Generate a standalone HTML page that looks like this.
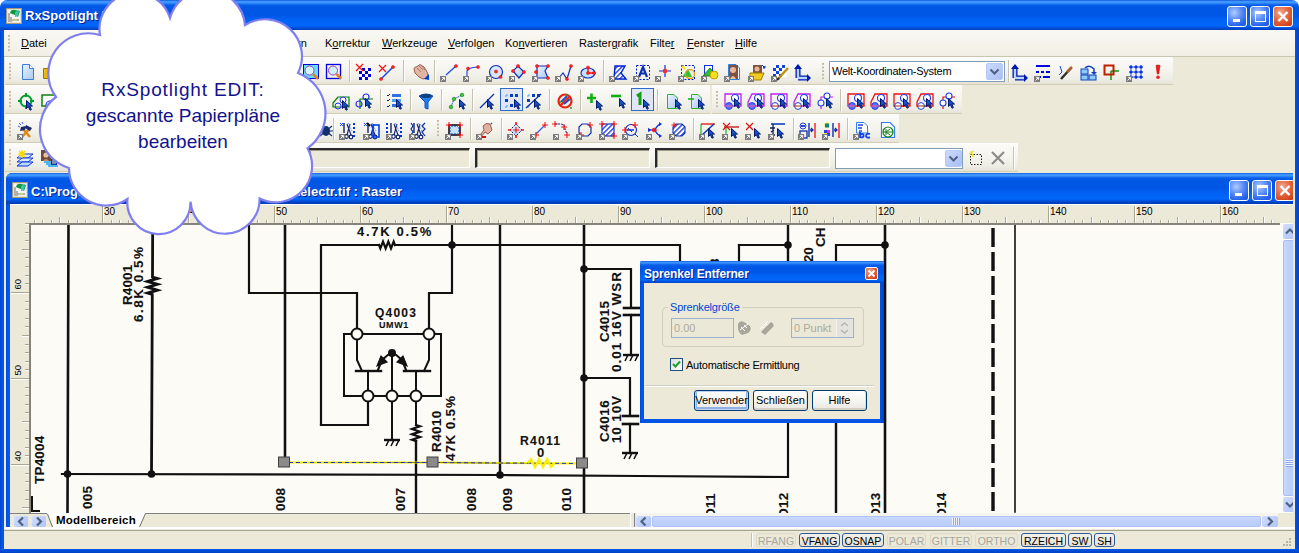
<!DOCTYPE html><html><head><meta charset="utf-8"><style>
*{box-sizing:border-box}
html,body{margin:0;padding:0}
body{width:1299px;height:553px;overflow:hidden;position:relative;background:#fff;font-family:"Liberation Sans", sans-serif;font-size:11px;color:#000}
.a{position:absolute}
.title{background:linear-gradient(to bottom,#0842D0 0px,#3D95FF 1px,#3D95FF 3px,#1A6FF0 4px,#0058E6 6px,#0055E5 15px,#0062F4 20px,#0066FA 26px,#0050D8 28px,#003DBB 30px)}
.ttext{color:#fff;font-weight:bold;font-size:13px;line-height:15px;text-shadow:1px 1px 0 #0A1E8C;white-space:nowrap}
.tb{position:absolute;background:linear-gradient(to bottom,#FCFCFA 0%,#F6F5F0 40%,#EEEDE4 80%,#E4E1D2 100%);box-shadow:inset 0 -1px 0 #D3CEB6}
.grip{position:absolute;width:3px;background:linear-gradient(to bottom,#BFBAA0 0,#BFBAA0 2px,transparent 2px) 0 0/2px 3.6px no-repeat;background-repeat:repeat-y}
.sep{position:absolute;width:2px;border-left:1px solid #C5C2B2;border-right:1px solid #fff}
.m{position:absolute;top:37px;line-height:12px;white-space:nowrap}
.m u{text-decoration:underline;text-underline-offset:1px}
</style></head><body>
<div class="a title" style="left:0;top:0;width:1299px;height:30px;border-radius:7px 7px 0 0"></div>
<div class="a" style="left:0;top:30px;width:4px;height:523px;background:linear-gradient(to right,#0041C8,#0058EE 2px,#0055E5)"></div>
<div class="a" style="left:1295px;top:30px;width:4px;height:523px;background:linear-gradient(to right,#0055E5,#0041C8)"></div>
<div class="a" style="left:0;top:549px;width:1299px;height:4px;background:linear-gradient(to bottom,#0055E5,#0041C8)"></div>
<div class="a" style="left:4px;top:30px;width:1291px;height:519px;background:#ECE9D8"></div>
<svg class="a" style="left:6px;top:8px" width="16" height="16"><rect x="0.5" y="0.5" width="15" height="15" fill="#E4E2DA" stroke="#A89A78"/><rect x="2" y="2" width="12" height="12" fill="#F4F4F0"/><path d="M4 5Q5 1 9 2L14 3L12 9L9 7L6 6Z" fill="#109840"/><path d="M9 4L13 2L12 8L9 9Z" fill="#40C0B0"/><path d="M3 5V14M5 9V14M6 12H13" stroke="#707070" stroke-width="1"/><ellipse cx="9" cy="12" rx="2.5" ry="1" fill="#C8D080"/></svg>
<div class="a ttext" style="left:25px;top:8px">RxSpotlight EDIT</div>
<div class="a" style="left:1227px;top:6px;width:20px;height:21px;border:1px solid #fff;border-radius:3px;background:radial-gradient(circle at 35% 30%,#B0CCFF 0%,#5C8FF5 40%,#2663EB 75%,#1C55D8 100%);overflow:hidden"><div class="a" style="left:5px;top:12px;width:7px;height:3px;background:#fff"></div></div>
<div class="a" style="left:1250px;top:6px;width:20px;height:21px;border:1px solid #fff;border-radius:3px;background:radial-gradient(circle at 35% 30%,#B0CCFF 0%,#5C8FF5 40%,#2663EB 75%,#1C55D8 100%);overflow:hidden"><div class="a" style="left:4px;top:4px;width:11px;height:11px;border:1px solid #fff;border-top-width:3px"></div></div>
<div class="a" style="left:1273px;top:6px;width:20px;height:21px;border:1px solid #fff;border-radius:3px;background:radial-gradient(circle at 35% 30%,#F0A890 0%,#E2683F 45%,#D2451C 80%,#C03C18 100%);overflow:hidden"><svg class="a" style="left:-1px;top:-1px" width="20" height="21"><path d="M5.5 6L14.5 15M14.5 6L5.5 15" stroke="#fff" stroke-width="2.4"/></svg></div>
<div class="a" style="left:4px;top:30px;width:1291px;height:27px;background:linear-gradient(to bottom,#F9F8F3,#F1EFE4);border-bottom:1px solid #C9C5AE"></div>
<div class="grip" style="left:8px;top:35px;height:16px"></div>
<div class="m" style="left:21px"><u>D</u>atei</div>
<div class="m" style="left:297px">rn</div>
<div class="m" style="left:325px">K<u>o</u>rrektur</div>
<div class="m" style="left:382px"><u>W</u>erkzeuge</div>
<div class="m" style="left:448px"><u>V</u>erfolgen</div>
<div class="m" style="left:505px">Ko<u>n</u>vertieren</div>
<div class="m" style="left:579px">Raster<u>g</u>rafik</div>
<div class="m" style="left:650px">Filte<u>r</u></div>
<div class="m" style="left:687px"><u>F</u>enster</div>
<div class="m" style="left:735px"><u>H</u>ilfe</div>
<div class="tb" style="left:5px;top:57px;width:813px;height:28px"></div>
<div class="grip" style="left:9px;top:63px;height:18px"></div>
<div class="tb" style="left:818px;top:57px;width:355px;height:28px"></div>
<div class="grip" style="left:822px;top:63px;height:18px"></div>
<div class="tb" style="left:5px;top:85px;width:705px;height:29px"></div>
<div class="grip" style="left:9px;top:91px;height:18px"></div>
<div class="tb" style="left:712px;top:85px;width:250px;height:29px"></div>
<div class="grip" style="left:716px;top:91px;height:18px"></div>
<div class="tb" style="left:5px;top:114px;width:428px;height:29px"></div>
<div class="grip" style="left:9px;top:120px;height:18px"></div>
<div class="tb" style="left:433px;top:114px;width:466px;height:29px"></div>
<div class="grip" style="left:437px;top:120px;height:18px"></div>
<div class="tb" style="left:5px;top:143px;width:1013px;height:29px"></div>
<div class="grip" style="left:9px;top:149px;height:18px"></div>
<div class="sep" style="left:349px;top:60px;height:22px"></div>
<div class="sep" style="left:403px;top:60px;height:22px"></div>
<div class="sep" style="left:434px;top:60px;height:22px"></div>
<div class="sep" style="left:603px;top:60px;height:22px"></div>
<div class="sep" style="left:1008px;top:60px;height:22px"></div>
<div class="sep" style="left:380px;top:89px;height:22px"></div>
<div class="sep" style="left:410px;top:89px;height:22px"></div>
<div class="sep" style="left:441px;top:89px;height:22px"></div>
<div class="sep" style="left:472px;top:89px;height:22px"></div>
<div class="sep" style="left:549px;top:89px;height:22px"></div>
<div class="sep" style="left:580px;top:89px;height:22px"></div>
<div class="sep" style="left:657px;top:89px;height:22px"></div>
<div class="sep" style="left:840px;top:89px;height:22px"></div>
<div class="sep" style="left:333px;top:118px;height:22px"></div>
<div class="sep" style="left:470px;top:118px;height:22px"></div>
<div class="sep" style="left:501px;top:118px;height:22px"></div>
<div class="sep" style="left:693px;top:118px;height:22px"></div>
<div class="sep" style="left:793px;top:118px;height:22px"></div>
<div class="sep" style="left:847px;top:118px;height:22px"></div>
<div class="sep" style="left:1013px;top:147px;height:22px"></div>
<div class="a" style="left:500px;top:88px;width:23px;height:23px;background:#E1E6F6;border:1px solid #316AC5"></div>
<div class="a" style="left:631px;top:88px;width:23px;height:23px;background:#E1E6F6;border:1px solid #316AC5"></div>
<div class="a" style="left:829px;top:61px;width:176px;height:21px;background:#fff;border:1px solid #7F9DB9"></div>
<div class="a" style="left:832px;top:65px;line-height:13px;font-size:11px;letter-spacing:-0.25px">Welt-Koordinaten-System</div>
<div class="a" style="left:986px;top:63px;width:17px;height:17px;border-radius:2px;background:linear-gradient(135deg,#CCDAFD,#B6CAF8 60%,#A8BFF5);border:1px solid #B5C8F7"></div><svg class="a" style="left:986px;top:63px" width="17" height="17"><path d="M4.5 6.5L8.5 10.5L12.5 6.5" stroke="#4D6185" stroke-width="2" fill="none"/></svg>
<div class="a" style="left:308px;top:148px;width:162px;height:20px;border-top:2px solid #2A2A2A;border-left:2px solid #2A2A2A;border-right:1px solid #fff;border-bottom:1px solid #fff;background:#ECE9D8;box-shadow:inset 1px 1px 0 #9D9A8A"></div>
<div class="a" style="left:475px;top:148px;width:175px;height:20px;border-top:2px solid #2A2A2A;border-left:2px solid #2A2A2A;border-right:1px solid #fff;border-bottom:1px solid #fff;background:#ECE9D8;box-shadow:inset 1px 1px 0 #9D9A8A"></div>
<div class="a" style="left:655px;top:148px;width:175px;height:20px;border-top:2px solid #2A2A2A;border-left:2px solid #2A2A2A;border-right:1px solid #fff;border-bottom:1px solid #fff;background:#ECE9D8;box-shadow:inset 1px 1px 0 #9D9A8A"></div>
<div class="a" style="left:835px;top:148px;width:128px;height:21px;background:#fff;border:1px solid #7F9DB9"></div>
<div class="a" style="left:945px;top:150px;width:17px;height:17px;border-radius:2px;background:linear-gradient(135deg,#CCDAFD,#B6CAF8 60%,#A8BFF5);border:1px solid #B5C8F7"></div><svg class="a" style="left:945px;top:150px" width="17" height="17"><path d="M4.5 6.5L8.5 10.5L12.5 6.5" stroke="#4D6185" stroke-width="2" fill="none"/></svg>
<svg class="a" style="left:0;top:0" width="1299" height="200"><defs>
<g id="ab"><rect x="0" y="12" width="6" height="6" fill="#7C7C7C"/><path d="M1.5 16.5L4.3 13.7M2.2 13.6H4.4V15.8" stroke="#fff" stroke-width="1" fill="none"/></g>
<g id="cur"><path d="M0.5 0.5V8.5L2.4 6.7L4 10.2L5.4 9.6L3.8 6.1H6.5Z" fill="#1A4FC0" stroke="#001A70" stroke-width="1" stroke-linejoin="round"/></g>
<g id="rdot"><circle r="1.6" fill="#FF2020" stroke="#D00000" stroke-width="0.4"/></g>
<pattern id="hatch" width="3.5" height="3.5" patternUnits="userSpaceOnUse" patternTransform="rotate(45)"><rect width="3.5" height="3.5" fill="#fff"/><rect width="1.3" height="3.5" fill="#1030D8"/></pattern>
<linearGradient id="lb" x1="0" y1="0" x2="1" y2="1"><stop offset="0" stop-color="#EAF4FF"/><stop offset="1" stop-color="#A8C8F0"/></linearGradient>
</defs><g transform="translate(21,64)"><path d="M1.5 0.5H8.5L12.5 4.5V15.5H1.5Z" fill="url(#lb)" stroke="#3A7BE0"/><path d="M8.5 0.5V4.5H12.5" fill="#fff" stroke="#3A7BE0"/></g><g transform="translate(43,64)"><path d="M0.5 4.5H6L7.5 3H14.5V14.5H0.5Z" fill="#E8B818" stroke="#A07800"/></g><g transform="translate(303,64)"><rect x="0.5" y="0.5" width="15" height="14" fill="#60E0F0" stroke="#0000E0"/><circle cx="6.5" cy="6.5" r="4.5" fill="#D8F4FF" stroke="#A040C0"/><path d="M10 10L15 15" stroke="#E08020" stroke-width="2.5"/></g><g transform="translate(326,64)"><rect x="0.5" y="0.5" width="14" height="14" fill="none" stroke="#0000E0" stroke-width="1.3"/><circle cx="7" cy="6.5" r="4.5" fill="#D0F0FF" stroke="#A040C0"/><path d="M10.5 10L15 14.5" stroke="#E08020" stroke-width="2.5"/></g><g transform="translate(356,64)"><g fill="#0000E0"><rect x="4" y="4" width="12" height="12" fill="#fff"/><rect x="6" y="4" width="3" height="3"/><rect x="12" y="4" width="3" height="3"/><rect x="9" y="7" width="3" height="3"/><rect x="3" y="7" width="3" height="3"/><rect x="6" y="10" width="3" height="3"/><rect x="12" y="10" width="3" height="3"/><rect x="9" y="13" width="3" height="3"/><rect x="3" y="13" width="3" height="3"/></g><path d="M0 0L7 7M7 0L0 7" stroke="#FF1010" stroke-width="1.2"/></g><g transform="translate(379,64)"><path d="M2 15L14 3" stroke="#2050E0" stroke-width="1.6"/><use href="#rdot" x="2" y="15"/><use href="#rdot" x="14" y="3"/><path d="M0 1L7 8M7 1L0 8" stroke="#FF1010" stroke-width="1.2"/></g><g transform="translate(413,64)"><path d="M1 5Q1 3 3 3L5 2Q6 0 8 1L11 3L13 6L15 10L14 14L10 15L6 13L2 9Z" fill="#E2B4A4" stroke="#9A6050"/><path d="M4 4L8 8M6 2L10 6M9 2L12 6" stroke="#B07868" stroke-width="1"/><path d="M11 15L16 10V16Z" fill="#0040D0"/></g><g transform="translate(440,64)"><path d="M6 11L16 2" stroke="#2050E0" stroke-width="1.3"/><use href="#rdot" x="16" y="2"/><use href="#ab"/></g><g transform="translate(463,64)"><path d="M4 12V7Q6 4 10 3.5L15 3" stroke="#2050E0" stroke-width="1.2" fill="none"/><use href="#rdot" x="5" y="4.5"/><use href="#rdot" x="15" y="3"/><use href="#ab"/></g><g transform="translate(486,64)"><circle cx="10" cy="8" r="6.5" fill="#D8E8F8" stroke="#1030C0" stroke-width="1.2"/><use href="#rdot" x="10" y="7.5"/><use href="#rdot" x="14.5" y="13"/><use href="#ab"/></g><g transform="translate(509,64)"><path d="M9 2L15 8L10 14L4 7Z" fill="url(#lb)" stroke="#1030C0" stroke-width="1.2"/><use href="#rdot" x="9" y="2"/><use href="#rdot" x="15" y="8"/><use href="#rdot" x="4" y="7"/><use href="#ab"/></g><g transform="translate(532,64)"><path d="M5 2H16L13 7L16 14H5Z" fill="url(#lb)" stroke="#1030C0" stroke-width="1.2"/><use href="#rdot" x="5" y="2"/><use href="#rdot" x="16" y="2"/><use href="#rdot" x="4" y="8"/><use href="#rdot" x="16" y="14"/><use href="#ab"/></g><g transform="translate(555,64)"><path d="M4 14L8 9L12 15L16 2" stroke="#1030C0" stroke-width="1.2" fill="none"/><use href="#rdot" x="12" y="15"/><use href="#rdot" x="16" y="2"/><use href="#ab"/></g><g transform="translate(578,64)"><ellipse cx="10" cy="9" rx="7" ry="5" fill="#C8E0F8" stroke="#1030C0" stroke-width="1.2"/><path d="M10 3V9H16" stroke="#FF1010" stroke-width="1.3" fill="none"/><use href="#rdot" x="10" y="3.5"/><use href="#rdot" x="10" y="9"/><use href="#rdot" x="16" y="9"/><use href="#ab"/></g><g transform="translate(609,64)"><path d="M6 2H16L12 9L17 15H5Z" fill="url(#hatch)" stroke="#0020D0" stroke-width="1.4"/><use href="#ab"/></g><g transform="translate(633,64)"><rect x="3.5" y="1.5" width="13" height="14" fill="none" stroke="#0020D0" stroke-dasharray="2 1.5"/><path d="M6 13L10 3L14 13M7.5 9.5H12.5" stroke="#1030B0" stroke-width="2.2" fill="none"/><use href="#ab"/></g><g transform="translate(655,64)"><path d="M4 7H16M10 1V13" stroke="#1030E0" stroke-width="1.2"/><circle cx="10" cy="7" r="2.3" fill="#F03030"/><use href="#ab"/></g><g transform="translate(678,64)"><rect x="3.5" y="1.5" width="13" height="14" fill="none" stroke="#0020D0" stroke-dasharray="2 1.5"/><path d="M4 13L10 5L14 13Z" fill="#30C030"/><circle cx="12" cy="10" r="4.5" fill="none" stroke="#E0A020" stroke-width="1.3"/><path d="M4 2L7 5" stroke="#FFE000" stroke-width="2"/><use href="#ab"/></g><g transform="translate(701,64)"><rect x="3.5" y="1.5" width="8" height="9" fill="#fff" stroke="#1030E0"/><path d="M2 12L9 4L15 12Z" fill="#30C030" stroke="#208020"/><circle cx="13" cy="11" r="4" fill="#F0E020" stroke="#C0A000"/><use href="#ab"/></g><g transform="translate(724,64)"><path d="M4.5 0.5H12L15.5 4V15.5H4.5Z" fill="#fff" stroke="#3080E0"/><rect x="5" y="1" width="9" height="14" fill="#805040"/><circle cx="9" cy="6" r="3" fill="#E8B898"/><path d="M6 15Q9 9 12 15" fill="#E8C0A0"/><use href="#ab"/></g><g transform="translate(748,64)"><rect x="5" y="1" width="9" height="11" fill="#805040"/><circle cx="9" cy="5" r="2.5" fill="#E8B898"/><path d="M14 1L17 4M15 4H17V2" stroke="#0030C0"/><path d="M2 9H10L16 9L13 16H2Z" fill="#F0C820" stroke="#A08000"/><use href="#ab"/></g><g transform="translate(771,64)"><g fill="#1040E0"><rect x="3" y="1" width="13" height="12" fill="#fff"/><rect x="5" y="1" width="3" height="3"/><rect x="11" y="1" width="3" height="3"/><rect x="8" y="4" width="3" height="3"/><rect x="2" y="4" width="3" height="3"/><rect x="5" y="7" width="3" height="3"/><rect x="2" y="10" width="3" height="3"/><rect x="8" y="10" width="3" height="3"/></g><path d="M7 15L17 4" stroke="#C09010" stroke-width="2.5"/><path d="M6 16L8 14" stroke="#202020" stroke-width="2"/><use href="#ab"/></g><g transform="translate(794,64)"><path d="M4 14V4M4 14H14" stroke="#0018B0" stroke-width="5"/><path d="M4 14V4M4 14H14" stroke="#B8D4FA" stroke-width="2.4"/><path d="M0 5L4 0L8 5Z M13 10L17 14L13 18Z" fill="#0018B0"/></g><g transform="translate(1011,64)"><path d="M4 14V4M4 14H14" stroke="#0018B0" stroke-width="5"/><path d="M4 14V4M4 14H14" stroke="#B8D4FA" stroke-width="2.4"/><path d="M0 5L4 0L8 5Z M13 10L17 14L13 18Z" fill="#0018B0"/></g><g transform="translate(1034,64)"><path d="M2 2H16M2 8H5M7 8H10M12 8H16M2 13H7M9 13H16" stroke="#0000E0" stroke-width="2.2"/><use href="#ab"/></g><g transform="translate(1057,64)"><path d="M4 15L14 4" stroke="#303030" stroke-width="2.5"/><path d="M10 8L15 3" stroke="#B06030" stroke-width="2.5"/><path d="M3 2L5 8L2 11" stroke="#2040D0" stroke-width="1" fill="none"/></g><g transform="translate(1080,64)"><rect x="1" y="5" width="7" height="5" fill="#8ACCF8" stroke="#1040C0"/><rect x="1" y="11" width="7" height="5" fill="#8ACCF8" stroke="#1040C0"/><rect x="9" y="11" width="7" height="5" fill="#8ACCF8" stroke="#1040C0"/><path d="M5 4Q9 0 14 5V10" stroke="#1040C0" stroke-width="1.5" fill="none"/><path d="M11 8H17L14 11Z" fill="#1040C0"/></g><g transform="translate(1103,64)"><path d="M8 7H16M8 7V16" stroke="#109010" stroke-width="1.5"/><rect x="1.5" y="1.5" width="9" height="9" fill="none" stroke="#C02000" stroke-width="2"/></g><g transform="translate(1126,64)"><g fill="#0030F0"><circle cx="5" cy="3" r="1.6"/><circle cx="10" cy="3" r="1.6"/><circle cx="15" cy="3" r="1.6"/><circle cx="5" cy="8" r="1.6"/><circle cx="10" cy="8" r="1.6"/><circle cx="15" cy="8" r="1.6"/><circle cx="5" cy="13" r="1.6"/><circle cx="10" cy="13" r="1.6"/><circle cx="15" cy="13" r="1.6"/></g><path d="M3 3H17M3 8H17M3 13H17M5 1V15M10 1V15M15 1V15" stroke="#0030F0" stroke-width="0.8"/><use href="#ab"/></g><g transform="translate(1153,64)"><path d="M3 1.5Q5 0.5 7 1.5L5.7 10H4.3Z" fill="#F02020" stroke="#C00000" stroke-width="0.6"/><circle cx="5" cy="13.3" r="1.8" fill="#F02020"/></g><g transform="translate(18,93)"><circle cx="8" cy="8" r="5.5" fill="none" stroke="#00A030" stroke-width="2"/><path d="M8 0V4M8 12V16M0 8H4M12 8H16" stroke="#00A030" stroke-width="2"/><use href="#cur" x="8" y="7"/></g><g transform="translate(41,93)"><rect x="1" y="2" width="14" height="11" fill="#fff" stroke="#108010" stroke-width="1.5"/><circle cx="9" cy="12" r="4" fill="#fff" stroke="#1040E0" stroke-width="1.2"/></g><g transform="translate(332,93)"><path d="M1 10L6 4H17V14H1Z" fill="none" stroke="#008000" stroke-width="1.2"/><circle cx="11" cy="7" r="3" fill="#fff" stroke="#2030F0"/><circle cx="6" cy="13" r="3" fill="none" stroke="#2030F0"/><use href="#cur" x="10" y="7"/></g><g transform="translate(356,93)"><path d="M4 16V6H17" stroke="#008000" stroke-width="1.2" fill="none"/><circle cx="10" cy="4" r="3" fill="none" stroke="#2030F0" stroke-width="1.2"/><circle cx="3" cy="11" r="3" fill="none" stroke="#2030F0" stroke-width="1.2"/><use href="#cur" x="9" y="5"/></g><g transform="translate(386,93)"><path d="M1 2L2 3L4 1M1 7L2 8L4 6M1 13L2 14L4 12" stroke="#102080" fill="none"/><rect x="6" y="1" width="9" height="3" fill="#3070E0"/><rect x="6" y="6" width="9" height="3" fill="#50A0F0"/><rect x="6" y="11" width="9" height="3" fill="#3070E0"/><use href="#cur" x="10" y="6"/></g><g transform="translate(418,93)"><path d="M1 3Q8 -1 15 3L10 9V16L7 15V9Z" fill="#2080F0" stroke="#1050C0"/><ellipse cx="8" cy="3" rx="6" ry="2" fill="#104080"/></g><g transform="translate(449,93)"><path d="M2 14L5 6L13 2" stroke="#1030D0" stroke-dasharray="1.5 1" fill="none"/><circle cx="2" cy="14" r="1.8" fill="#40C040" stroke="#108010" stroke-width="0.6"/><circle cx="5" cy="6" r="1.8" fill="#40C040" stroke="#108010" stroke-width="0.6"/><circle cx="13" cy="2" r="1.8" fill="#40C040" stroke="#108010" stroke-width="0.6"/><use href="#cur" x="10" y="6"/></g><g transform="translate(479,93)"><path d="M1 15L15 1" stroke="#1030B0" stroke-width="1.3"/><use href="#cur" x="8" y="6"/></g><g transform="translate(503,93)"><g fill="#0040C0"><rect x="7" y="1" width="3" height="3"/><rect x="12" y="1" width="3" height="3"/><rect x="2" y="6" width="3" height="3"/><rect x="7" y="11" width="3" height="3"/></g><path d="M2 3H4V1M2 14H4V12" stroke="#40A0F0" fill="none"/><use href="#cur" x="11" y="6"/></g><g transform="translate(525,93)"><g fill="#0040C0"><rect x="7" y="1" width="3" height="3"/><rect x="12" y="1" width="3" height="3"/><rect x="2" y="6" width="3" height="3"/></g><path d="M2 3H4V1M2 14H4V12" stroke="#40A0F0" fill="none"/><path d="M1 15L16 1" stroke="#1030B0" stroke-width="1.3"/><use href="#cur" x="9" y="6"/></g><g transform="translate(557,93)"><circle cx="8" cy="8" r="6.5" fill="none" stroke="#F02010" stroke-width="2.2"/><path d="M3 13L13 3" stroke="#F02010" stroke-width="2.2"/><path d="M4 9L10 3M7 11L13 6" stroke="#2050C0" stroke-width="2"/><circle cx="3" cy="9" r="1" fill="#20A020"/><circle cx="14" cy="15" r="1" fill="#20A020"/><circle cx="10" cy="2" r="1" fill="#20A020"/></g><g transform="translate(587,93)"><path d="M0 5H9M4.5 0.5V10" stroke="#10B010" stroke-width="2.6"/><use href="#cur" x="9" y="7"/></g><g transform="translate(610,93)"><path d="M1 3H11" stroke="#10B010" stroke-width="2.6"/><use href="#cur" x="9" y="5"/></g><g transform="translate(634,93)"><path d="M3 3L6 1V12" stroke="#10A010" stroke-width="3" fill="none"/><use href="#cur" x="9" y="6"/></g><g transform="translate(666,93)"><path d="M1.5 1.5H8L11.5 5V15.5H1.5Z" fill="url(#lb)" stroke="#30B030"/><use href="#cur" x="9" y="6"/></g><g transform="translate(688,93)"><path d="M3.5 1.5H10L13.5 5V15.5H3.5Z" fill="url(#lb)" stroke="#30B030"/><path d="M0 6H6" stroke="#20B020" stroke-width="1.6"/><use href="#cur" x="10" y="6"/></g><g transform="translate(724,93)"><path d="M1 1H17V13H1Z" fill="none" stroke="#C020F0" stroke-width="1.3"/><circle cx="11" cy="5" r="3.5" fill="#fff" stroke="#2040F0" stroke-width="1.1"/><circle cx="5" cy="13" r="3.4" fill="#6070F0" stroke="#2040F0"/><path d="M1 13H9" stroke="#F060A0"/><use href="#cur" x="10" y="5"/></g><g transform="translate(747,93)"><path d="M1 9L5 1H17V13H1Z" fill="none" stroke="#C020F0" stroke-width="1.3"/><circle cx="11" cy="5" r="3.5" fill="#fff" stroke="#2040F0" stroke-width="1.1"/><circle cx="5" cy="13" r="3.4" fill="#6070F0" stroke="#2040F0"/><path d="M1 13H9" stroke="#F060A0"/><use href="#cur" x="10" y="5"/></g><g transform="translate(770,93)"><path d="M1 1H17V13H1Z" fill="none" stroke="#C020F0" stroke-width="1.3"/><circle cx="11" cy="5" r="3.5" fill="#fff" stroke="#2040F0" stroke-width="1.1"/><circle cx="5" cy="13" r="3.4" fill="#fff" stroke="#2040F0"/><path d="M1 13H9" stroke="#A03010"/><use href="#cur" x="10" y="5"/></g><g transform="translate(793,93)"><path d="M1 9L5 1H17V13H1Z" fill="none" stroke="#C020F0" stroke-width="1.3"/><circle cx="11" cy="5" r="3.5" fill="#fff" stroke="#2040F0" stroke-width="1.1"/><circle cx="5" cy="13" r="3.4" fill="#fff" stroke="#2040F0"/><path d="M1 13H9" stroke="#A03010"/><use href="#cur" x="10" y="5"/></g><g transform="translate(818,93)"><path d="M3 16V4H15" stroke="#C020F0" stroke-width="1.2" fill="none"/><circle cx="9" cy="3" r="3" fill="#fff" stroke="#2040F0" stroke-width="1.1"/><circle cx="3" cy="10" r="3" fill="#fff" stroke="#2040F0" stroke-width="1.1"/><use href="#cur" x="8" y="5"/></g><g transform="translate(847,93)"><path d="M1 1H17V13H1Z" fill="none" stroke="#F01010" stroke-width="1.3"/><circle cx="11" cy="5" r="3.5" fill="#fff" stroke="#2040F0" stroke-width="1.1"/><circle cx="5" cy="13" r="3.4" fill="#6070F0" stroke="#2040F0"/><path d="M1 13H9" stroke="#F060A0"/><use href="#cur" x="10" y="5"/></g><g transform="translate(870,93)"><path d="M1 9L5 1H17V13H1Z" fill="none" stroke="#F01010" stroke-width="1.3"/><circle cx="11" cy="5" r="3.5" fill="#fff" stroke="#2040F0" stroke-width="1.1"/><circle cx="5" cy="13" r="3.4" fill="#6070F0" stroke="#2040F0"/><path d="M1 13H9" stroke="#F060A0"/><use href="#cur" x="10" y="5"/></g><g transform="translate(893,93)"><path d="M1 1H17V13H1Z" fill="none" stroke="#F01010" stroke-width="1.3"/><circle cx="11" cy="5" r="3.5" fill="#fff" stroke="#2040F0" stroke-width="1.1"/><circle cx="5" cy="13" r="3.4" fill="#fff" stroke="#2040F0"/><path d="M1 13H9" stroke="#A03010"/><use href="#cur" x="10" y="5"/></g><g transform="translate(916,93)"><path d="M1 9L5 1H17V13H1Z" fill="none" stroke="#F01010" stroke-width="1.3"/><circle cx="11" cy="5" r="3.5" fill="#fff" stroke="#2040F0" stroke-width="1.1"/><circle cx="5" cy="13" r="3.4" fill="#fff" stroke="#2040F0"/><path d="M1 13H9" stroke="#A03010"/><use href="#cur" x="10" y="5"/></g><g transform="translate(940,93)"><path d="M3 16V4H15" stroke="#E01010" stroke-width="1.2" fill="none"/><circle cx="9" cy="3" r="3" fill="#fff" stroke="#2040F0" stroke-width="1.1"/><circle cx="3" cy="10" r="3" fill="#fff" stroke="#2040F0" stroke-width="1.1"/><use href="#cur" x="8" y="5"/></g><g transform="translate(17,122)"><path d="M5 15L13 6M13 15L6 7" stroke="#E08818" stroke-width="2.6"/><path d="M9 3L15 6L13 9L8 6Z M4 5L9 4L8 8L3 9Z" fill="#1A2A6A"/><path d="M2 1L4 3M5 0L6 2M1 4L3 5" stroke="#3060E0"/><use href="#ab"/></g><g transform="translate(318,122)"><ellipse cx="8" cy="9" rx="4" ry="5" fill="#103070"/><path d="M2 4L14 14M2 14L14 4M1 9H15" stroke="#103070" stroke-width="1.1"/></g><g transform="translate(339,122)"><path d="M5 1V11" stroke="#102070" stroke-width="1.4"/><path d="M8 2L12 13M11 2L8 13" stroke="#102070" stroke-width="1.1"/><path d="M9 1L13 9" stroke="#5080E0" stroke-dasharray="1 1"/><circle cx="7.5" cy="14.5" r="1.8" fill="#fff" stroke="#102070" stroke-width="1.2"/><circle cx="12" cy="15" r="1.8" fill="#fff" stroke="#102070" stroke-width="1.2"/><path d="M15 1V16" stroke="#0030F0" stroke-width="2" stroke-dasharray="2 2"/><path d="M1 1L4 4M1 4L4 1" stroke="#2040E0"/><use href="#ab"/></g><g transform="translate(363,122)"><path d="M5 1V11" stroke="#102070" stroke-width="1.4"/><path d="M8 2L12 13M11 2L8 13" stroke="#102070" stroke-width="1.1"/><path d="M9 1L13 9" stroke="#5080E0" stroke-dasharray="1 1"/><circle cx="7.5" cy="14.5" r="1.8" fill="#fff" stroke="#102070" stroke-width="1.2"/><circle cx="12" cy="15" r="1.8" fill="#fff" stroke="#102070" stroke-width="1.2"/><rect x="10" y="3" width="6" height="12" fill="none" stroke="#0040F0" stroke-width="1.6"/><path d="M1 1L4 4M1 4L4 1" stroke="#2040E0"/><path d="M4 1L7 4" stroke="#101010" stroke-width="2"/><use href="#ab"/></g><g transform="translate(386,122)"><path d="M5 1V11" stroke="#102070" stroke-width="1.4"/><path d="M8 2L12 13M11 2L8 13" stroke="#102070" stroke-width="1.1"/><path d="M9 1L13 9" stroke="#5080E0" stroke-dasharray="1 1"/><circle cx="7.5" cy="14.5" r="1.8" fill="#fff" stroke="#102070" stroke-width="1.2"/><circle cx="12" cy="15" r="1.8" fill="#fff" stroke="#102070" stroke-width="1.2"/><path d="M15 1V16M1 1V12" stroke="#0030F0" stroke-width="2" stroke-dasharray="2 2"/><use href="#ab"/></g><g transform="translate(409,122)"><path d="M5 1V11" stroke="#102070" stroke-width="1.4"/><path d="M8 2L12 13M11 2L8 13" stroke="#102070" stroke-width="1.1"/><path d="M9 1L13 9" stroke="#5080E0" stroke-dasharray="1 1"/><circle cx="7.5" cy="14.5" r="1.8" fill="#fff" stroke="#102070" stroke-width="1.2"/><circle cx="12" cy="15" r="1.8" fill="#fff" stroke="#102070" stroke-width="1.2"/><path d="M2 1L4 4L2 7L4 10L2 13M16 1L13 4L16 7L13 10L16 14" stroke="#0030A0" stroke-width="1.2" fill="none"/><use href="#ab"/></g><g transform="translate(445,122)"><rect x="4" y="3" width="11" height="10" fill="#C8E0F8" stroke="#101010" stroke-width="1.6"/><path d="M6 4H13M5 5V12M14 5V12M6 12H13" stroke="#0040C0" stroke-width="1" stroke-dasharray="2 1"/><path d="M1 3H7M4 0V6" stroke="#FF1010" stroke-width="1.1"/><path d="M12 3H18M15 0V6" stroke="#FF1010" stroke-width="1.1"/><path d="M12 13H18M15 10V16" stroke="#FF1010" stroke-width="1.1"/><use href="#ab"/></g><g transform="translate(476,122)"><path d="M7 4Q10 0 14 2L16 8L12 12L9 10L5 15L4 13L8 8Z" fill="#E0B0A0" stroke="#9A6050"/><path d="M6 14H10V16H6Z" fill="#D01010"/><path d="M15 1L16 2" stroke="#2040E0" stroke-width="1.5"/><use href="#ab"/></g><g transform="translate(507,122)"><path d="M9 2L15 8L9 14L3 8Z" fill="url(#lb)" stroke="#102060" stroke-width="1" stroke-dasharray="2 1.5"/><path d="M6 8H12M9 5V11" stroke="#FF1010" stroke-width="1.1"/><path d="M9 0V3M9 13V16M1 8H4M14 8H17" stroke="#FF1010" stroke-width="1.6"/><use href="#ab"/></g><g transform="translate(530,122)"><path d="M5 13L15 3" stroke="#3060E0" stroke-width="1.2"/><path d="M12 3H18M15 0V6" stroke="#FF1010" stroke-width="1.1"/><path d="M3 13H9M6 10V16" stroke="#FF1010" stroke-width="1.1"/><use href="#ab"/></g><g transform="translate(553,122)"><path d="M2 2H8Q12 3 12 7L14 12" stroke="#1030B0" stroke-width="1.1" fill="none" stroke-dasharray="2 1"/><path d="M-1 2H5M2 -1V5" stroke="#FF1010" stroke-width="1.1"/><path d="M8 5H14M11 2V8" stroke="#FF1010" stroke-width="1.1"/><path d="M11 13H17M14 10V16" stroke="#FF1010" stroke-width="1.1"/><use href="#ab"/></g><g transform="translate(576,122)"><path d="M6 2H12L15 5V11L12 14H6L3 11V5Z" fill="none" stroke="#1030A0" stroke-width="1.2"/><path d="M11 3H17M14 0V6" stroke="#FF1010" stroke-width="1.1"/><path d="M2 13H8M5 10V16" stroke="#FF1010" stroke-width="1.1"/><use href="#ab"/></g><g transform="translate(599,122)"><rect x="3" y="2" width="12" height="12" fill="url(#hatch)" stroke="#1030B0" stroke-width="1.1"/><path d="M0 2H6M3 -1V5" stroke="#FF1010" stroke-width="1.1"/><path d="M12 2H18M15 -1V5" stroke="#FF1010" stroke-width="1.1"/><path d="M12 14H18M15 11V17" stroke="#FF1010" stroke-width="1.1"/><use href="#ab"/></g><g transform="translate(622,122)"><circle cx="9" cy="8" r="5.5" fill="none" stroke="#1030C0" stroke-width="1.2"/><path d="M6 6L10 10M13 12L16 15" stroke="#1030C0"/><path d="M0 8H6M3 5V11" stroke="#FF1010" stroke-width="1.1"/><path d="M10 3H16M13 0V6" stroke="#FF1010" stroke-width="1.1"/><path d="M5 8H12" stroke="#1030E0" stroke-width="1.5"/><use href="#ab"/></g><g transform="translate(646,122)"><path d="M2 6L6 8L2 10Z" fill="#1030E0"/><path d="M6 8H9M9 8Q11 3 15 2M9 8Q11 13 15 14" stroke="#1030E0" stroke-width="1.3" fill="none"/><path d="M13 0L16 2L13 4ZM13 12L16 14L13 16Z" fill="#1030E0"/><circle cx="8" cy="8" r="1.8" fill="none" stroke="#FF1010"/><path d="M5 8H11" stroke="#FF1010"/><use href="#ab"/></g><g transform="translate(669,122)"><path d="M7 2H13L16 5V11L13 14H7L4 11V5Z" fill="url(#hatch)" stroke="#1030A0" stroke-width="1.1"/><path d="M2.5 3H7.5M5 0.5V5.5" stroke="#FF1010" stroke-width="1.1"/><use href="#ab"/></g><g transform="translate(699,122)"><path d="M2 14V2" stroke="#10B010" stroke-width="1.1"/><path d="M2 2H16" stroke="#E01010" stroke-width="1.3"/><path d="M2 14L15 2" stroke="#1040C0" stroke-width="1.6"/><use href="#cur" x="9" y="6"/><use href="#ab"/></g><g transform="translate(722,122)"><path d="M4 14V6" stroke="#10B010" stroke-width="1.1"/><path d="M2 5H17" stroke="#C01010" stroke-width="1.3"/><path d="M1 1L8 8M8 1L1 8" stroke="#E01010" stroke-width="1.1"/><use href="#cur" x="9" y="6"/><use href="#ab"/></g><g transform="translate(745,122)"><path d="M1 1L8 8M8 1L1 8" stroke="#E01010" stroke-width="1.2"/><use href="#cur" x="9" y="6"/><use href="#ab"/></g><g transform="translate(768,122)"><path d="M3 2H17" stroke="#1040C0" stroke-width="1.6"/><path d="M5 2V14M2 6H7M3 10L6 8M3 13H7" stroke="#102060" stroke-width="1.3"/><use href="#cur" x="9" y="6"/><use href="#ab"/></g><g transform="translate(798,122)"><circle cx="5" cy="4" r="3" fill="none" stroke="#2040E0"/><rect x="3" y="3" width="4" height="2" fill="#2040E0"/><rect x="2" y="9" width="7" height="7" fill="none" stroke="#1030A0" stroke-width="1.3"/><path d="M11 1V15" stroke="#1030B0" stroke-width="1.4"/><path d="M12 8H15M13 6L15 8L13 10" stroke="#1030B0" stroke-width="1.3" fill="none"/><path d="M17 1V16" stroke="#F01010" stroke-width="1.3"/><use href="#ab"/></g><g transform="translate(822,122)"><circle cx="5" cy="3" r="2.6" fill="#F0F020"/><rect x="3" y="1.5" width="4" height="4" fill="#108080"/><g fill="#2040F0"><rect x="2" y="8" width="3" height="3"/><rect x="5" y="11" width="3" height="3"/></g><g fill="#F020F0"><rect x="5" y="8" width="3" height="3"/></g><g fill="#F0F000"><rect x="2" y="11" width="3" height="3"/></g><path d="M11 1V15" stroke="#1030B0" stroke-width="1.4"/><path d="M12 8H15M13 6L15 8L13 10" stroke="#1030B0" stroke-width="1.3" fill="none"/><path d="M17 1V16" stroke="#F01010" stroke-width="1.3"/><use href="#ab"/></g><g transform="translate(853,122)"><path d="M3.5 0.5H11L14.5 4V11H3.5Z" fill="#fff" stroke="#3080E0"/><path d="M5 3H10M5 6H9M6 9H9" stroke="#2040F0" stroke-width="1.3"/><path d="M7 16V10M7 14Q7 12 9 12Q11 12 10.5 14.5Q9 16 7 15M17 12Q13 11 13 14Q13 16 17 15.5" stroke="#1040F0" stroke-width="1.8" fill="none"/><use href="#ab"/></g><g transform="translate(880,122)"><path d="M1.5 0.5H10L14.5 5V15.5H1.5Z" fill="#fff" stroke="#3080F0" stroke-width="1.2"/><circle cx="8" cy="10" r="5" fill="none" stroke="#108010" stroke-width="1.2"/><path d="M3 10H13M6 7V13M6 10L10 7M6 10L10 13" stroke="#108010"/></g><g transform="translate(17,150)"><path d="M5 4H16L11 8H0Z" fill="#D8ECFC" stroke="#1030E0"/><path d="M5 8H16L11 12H0Z" fill="#D8ECFC" stroke="#1030E0"/><path d="M5 12H16L11 16H0Z" fill="#B8DCF8" stroke="#1030E0"/><circle cx="5" cy="4" r="2.5" fill="#FFF020"/><path d="M5 0V8M1 4H9M2 1L8 7M8 1L2 7" stroke="#F8D800" stroke-width="1.2"/></g><g transform="translate(41,150)"><rect x="0" y="0" width="10" height="11" fill="#6A4A38"/><circle cx="5" cy="5" r="2.6" fill="#E8C0A0"/><path d="M2 11Q5 7 8 11Z" fill="#C09070"/><path d="M3 12H12M5 14H15M7 16H17" stroke="#20A0F0" stroke-width="1.4"/><rect x="10" y="9" width="6" height="6" fill="#1030B0"/><rect x="11" y="10" width="4" height="4" fill="#8090A0"/></g><g transform="translate(968,150)"><rect x="2.5" y="4.5" width="11" height="10" fill="none" stroke="#202020" stroke-dasharray="1.5 1.5"/><path d="M1 4L6 1M3 1L5 7" stroke="#F0E020" stroke-width="1.4"/></g><g transform="translate(990,150)"><path d="M2 2L14 14M14 2L2 14" stroke="#8C8C8C" stroke-width="2.2"/></g></svg>
<div class="a" style="left:4px;top:172px;width:1291px;height:356px;background:#ECE9D8"></div>
<div class="a" style="left:6px;top:173px;width:1287px;height:355px;overflow:hidden"><div class="a" style="left:0;top:0;width:1300px;height:355px;background:linear-gradient(to right,#0048D8,#0058EE 2px,#0055E5);border-radius:6px 6px 0 0;overflow:hidden"><div class="a title" style="left:0;top:0;width:1300px;height:31px"></div></div></div>
<svg class="a" style="left:12px;top:182px" width="16" height="16"><rect x="0.5" y="0.5" width="15" height="15" fill="#E4E2DA" stroke="#A89A78"/><rect x="2" y="2" width="12" height="12" fill="#F4F4F0"/><path d="M4 5Q5 1 9 2L14 3L12 9L9 7L6 6Z" fill="#109840"/><path d="M9 4L13 2L12 8L9 9Z" fill="#40C0B0"/><path d="M3 5V14M5 9V14M6 12H13" stroke="#707070" stroke-width="1"/><ellipse cx="9" cy="12" rx="2.5" ry="1" fill="#C8D080"/></svg>
<div class="a ttext" style="left:31px;top:184px;width:140px;overflow:hidden">C:\Programme\RxSpotlight</div>
<div class="a ttext" style="left:200px;top:184px;width:202px;text-align:right">Beispiele\electr.tif : Raster</div>
<div class="a" style="left:1229px;top:180px;width:20px;height:21px;border:1px solid #fff;border-radius:3px;background:radial-gradient(circle at 35% 30%,#B0CCFF 0%,#5C8FF5 40%,#2663EB 75%,#1C55D8 100%);overflow:hidden"><div class="a" style="left:5px;top:12px;width:7px;height:3px;background:#fff"></div></div>
<div class="a" style="left:1252px;top:180px;width:20px;height:21px;border:1px solid #fff;border-radius:3px;background:radial-gradient(circle at 35% 30%,#B0CCFF 0%,#5C8FF5 40%,#2663EB 75%,#1C55D8 100%);overflow:hidden"><div class="a" style="left:4px;top:4px;width:11px;height:11px;border:1px solid #fff;border-top-width:3px"></div></div>
<div class="a" style="left:1275px;top:180px;width:18px;height:21px;overflow:hidden"><div class="a" style="left:0px;top:0px;width:20px;height:21px;border:1px solid #fff;border-radius:3px;background:radial-gradient(circle at 35% 30%,#F0A890 0%,#E2683F 45%,#D2451C 80%,#C03C18 100%);overflow:hidden"><svg class="a" style="left:-1px;top:-1px" width="20" height="21"><path d="M5.5 6L14.5 15M14.5 6L5.5 15" stroke="#fff" stroke-width="2.4"/></svg></div></div>
<div class="a" style="left:1293px;top:172px;width:2px;height:356px;background:#ECE9D8"></div>
<div class="a" style="left:10px;top:204px;width:1283px;height:323px;background:#ECE9D8"></div>
<svg class="a" style="left:0;top:0" width="1299" height="553"><rect x="10" y="204" width="1283" height="19" fill="#ECE9D8"/><rect x="10" y="204" width="20" height="310" fill="#ECE9D8"/><path d="M29 224H1280M30 223V513" stroke="#86847A" stroke-width="2"/><path d="M10 204.5H1293" stroke="#FFFFFF" stroke-width="1"/><path d="M34.5 220V223 M42.5 220V223 M51.5 220V223 M59.5 217V223 M68.5 220V223 M77.5 220V223 M85.5 220V223 M94.5 220V223 M102.5 206V223 M111.5 220V223 M119.5 220V223 M128.5 220V223 M137.5 220V223 M145.5 217V223 M154.5 220V223 M162.5 220V223 M171.5 220V223 M180.5 220V223 M188.5 206V223 M197.5 220V223 M205.5 220V223 M214.5 220V223 M223.5 220V223 M231.5 217V223 M240.5 220V223 M248.5 220V223 M257.5 220V223 M266.5 220V223 M274.5 206V223 M283.5 220V223 M291.5 220V223 M300.5 220V223 M309.5 220V223 M317.5 217V223 M326.5 220V223 M334.5 220V223 M343.5 220V223 M352.5 220V223 M360.5 206V223 M369.5 220V223 M377.5 220V223 M386.5 220V223 M395.5 220V223 M403.5 217V223 M412.5 220V223 M420.5 220V223 M429.5 220V223 M438.5 220V223 M446.5 206V223 M455.5 220V223 M463.5 220V223 M472.5 220V223 M481.5 220V223 M489.5 217V223 M498.5 220V223 M506.5 220V223 M515.5 220V223 M524.5 220V223 M532.5 206V223 M541.5 220V223 M549.5 220V223 M558.5 220V223 M567.5 220V223 M575.5 217V223 M584.5 220V223 M592.5 220V223 M601.5 220V223 M610.5 220V223 M618.5 206V223 M627.5 220V223 M635.5 220V223 M644.5 220V223 M653.5 220V223 M661.5 217V223 M670.5 220V223 M678.5 220V223 M687.5 220V223 M695.5 220V223 M704.5 206V223 M713.5 220V223 M721.5 220V223 M730.5 220V223 M738.5 220V223 M747.5 217V223 M756.5 220V223 M764.5 220V223 M773.5 220V223 M781.5 220V223 M790.5 206V223 M799.5 220V223 M807.5 220V223 M816.5 220V223 M824.5 220V223 M833.5 217V223 M842.5 220V223 M850.5 220V223 M859.5 220V223 M867.5 220V223 M876.5 206V223 M885.5 220V223 M893.5 220V223 M902.5 220V223 M910.5 220V223 M919.5 217V223 M928.5 220V223 M936.5 220V223 M945.5 220V223 M953.5 220V223 M962.5 206V223 M971.5 220V223 M979.5 220V223 M988.5 220V223 M996.5 220V223 M1005.5 217V223 M1014.5 220V223 M1022.5 220V223 M1031.5 220V223 M1039.5 220V223 M1048.5 206V223 M1057.5 220V223 M1065.5 220V223 M1074.5 220V223 M1082.5 220V223 M1091.5 217V223 M1100.5 220V223 M1108.5 220V223 M1117.5 220V223 M1125.5 220V223 M1134.5 206V223 M1143.5 220V223 M1151.5 220V223 M1160.5 220V223 M1168.5 220V223 M1177.5 217V223 M1186.5 220V223 M1194.5 220V223 M1203.5 220V223 M1211.5 220V223 M1220.5 206V223 M1229.5 220V223 M1237.5 220V223 M1246.5 220V223 M1254.5 220V223 M1263.5 217V223 M1271.5 220V223" stroke="#A9A693" stroke-width="1"/><path d="M35.5 220V223 M43.5 220V223 M52.5 220V223 M60.5 217V223 M69.5 220V223 M78.5 220V223 M86.5 220V223 M95.5 220V223 M103.5 206V223 M112.5 220V223 M120.5 220V223 M129.5 220V223 M138.5 220V223 M146.5 217V223 M155.5 220V223 M163.5 220V223 M172.5 220V223 M181.5 220V223 M189.5 206V223 M198.5 220V223 M206.5 220V223 M215.5 220V223 M224.5 220V223 M232.5 217V223 M241.5 220V223 M249.5 220V223 M258.5 220V223 M267.5 220V223 M275.5 206V223 M284.5 220V223 M292.5 220V223 M301.5 220V223 M310.5 220V223 M318.5 217V223 M327.5 220V223 M335.5 220V223 M344.5 220V223 M353.5 220V223 M361.5 206V223 M370.5 220V223 M378.5 220V223 M387.5 220V223 M396.5 220V223 M404.5 217V223 M413.5 220V223 M421.5 220V223 M430.5 220V223 M439.5 220V223 M447.5 206V223 M456.5 220V223 M464.5 220V223 M473.5 220V223 M482.5 220V223 M490.5 217V223 M499.5 220V223 M507.5 220V223 M516.5 220V223 M525.5 220V223 M533.5 206V223 M542.5 220V223 M550.5 220V223 M559.5 220V223 M568.5 220V223 M576.5 217V223 M585.5 220V223 M593.5 220V223 M602.5 220V223 M611.5 220V223 M619.5 206V223 M628.5 220V223 M636.5 220V223 M645.5 220V223 M654.5 220V223 M662.5 217V223 M671.5 220V223 M679.5 220V223 M688.5 220V223 M696.5 220V223 M705.5 206V223 M714.5 220V223 M722.5 220V223 M731.5 220V223 M739.5 220V223 M748.5 217V223 M757.5 220V223 M765.5 220V223 M774.5 220V223 M782.5 220V223 M791.5 206V223 M800.5 220V223 M808.5 220V223 M817.5 220V223 M825.5 220V223 M834.5 217V223 M843.5 220V223 M851.5 220V223 M860.5 220V223 M868.5 220V223 M877.5 206V223 M886.5 220V223 M894.5 220V223 M903.5 220V223 M911.5 220V223 M920.5 217V223 M929.5 220V223 M937.5 220V223 M946.5 220V223 M954.5 220V223 M963.5 206V223 M972.5 220V223 M980.5 220V223 M989.5 220V223 M997.5 220V223 M1006.5 217V223 M1015.5 220V223 M1023.5 220V223 M1032.5 220V223 M1040.5 220V223 M1049.5 206V223 M1058.5 220V223 M1066.5 220V223 M1075.5 220V223 M1083.5 220V223 M1092.5 217V223 M1101.5 220V223 M1109.5 220V223 M1118.5 220V223 M1126.5 220V223 M1135.5 206V223 M1144.5 220V223 M1152.5 220V223 M1161.5 220V223 M1169.5 220V223 M1178.5 217V223 M1187.5 220V223 M1195.5 220V223 M1204.5 220V223 M1212.5 220V223 M1221.5 206V223 M1230.5 220V223 M1238.5 220V223 M1247.5 220V223 M1255.5 220V223 M1264.5 217V223 M1272.5 220V223" stroke="#FFFFFF" stroke-width="1"/><text x="104" y="215" font-size="10" font-family="Liberation Sans" fill="#000">30</text><text x="190" y="215" font-size="10" font-family="Liberation Sans" fill="#000">40</text><text x="276" y="215" font-size="10" font-family="Liberation Sans" fill="#000">50</text><text x="362" y="215" font-size="10" font-family="Liberation Sans" fill="#000">60</text><text x="448" y="215" font-size="10" font-family="Liberation Sans" fill="#000">70</text><text x="534" y="215" font-size="10" font-family="Liberation Sans" fill="#000">80</text><text x="620" y="215" font-size="10" font-family="Liberation Sans" fill="#000">90</text><text x="706" y="215" font-size="10" font-family="Liberation Sans" fill="#000">100</text><text x="792" y="215" font-size="10" font-family="Liberation Sans" fill="#000">110</text><text x="878" y="215" font-size="10" font-family="Liberation Sans" fill="#000">120</text><text x="964" y="215" font-size="10" font-family="Liberation Sans" fill="#000">130</text><text x="1050" y="215" font-size="10" font-family="Liberation Sans" fill="#000">140</text><text x="1136" y="215" font-size="10" font-family="Liberation Sans" fill="#000">150</text><text x="1222" y="215" font-size="10" font-family="Liberation Sans" fill="#000">160</text><path d="M25 223.5H29 M25 232.5H29 M25 240.5H29 M22 249.5H29 M25 257.5H29 M25 266.5H29 M25 275.5H29 M25 283.5H29 M11 292.5H29 M25 301.5H29 M25 309.5H29 M25 318.5H29 M25 326.5H29 M22 335.5H29 M25 344.5H29 M25 352.5H29 M25 361.5H29 M25 369.5H29 M11 378.5H29 M25 387.5H29 M25 395.5H29 M25 404.5H29 M25 412.5H29 M22 421.5H29 M25 430.5H29 M25 438.5H29 M25 447.5H29 M25 455.5H29 M11 464.5H29 M25 473.5H29 M25 481.5H29 M25 490.5H29 M25 499.5H29 M22 507.5H29" stroke="#A9A693" stroke-width="1"/><path d="M25 224.5H29 M25 233.5H29 M25 241.5H29 M22 250.5H29 M25 258.5H29 M25 267.5H29 M25 276.5H29 M25 284.5H29 M11 293.5H29 M25 302.5H29 M25 310.5H29 M25 319.5H29 M25 327.5H29 M22 336.5H29 M25 345.5H29 M25 353.5H29 M25 362.5H29 M25 370.5H29 M11 379.5H29 M25 388.5H29 M25 396.5H29 M25 405.5H29 M25 413.5H29 M22 422.5H29 M25 431.5H29 M25 439.5H29 M25 448.5H29 M25 456.5H29 M11 465.5H29 M25 474.5H29 M25 482.5H29 M25 491.5H29 M25 500.5H29 M22 508.5H29" stroke="#FFFFFF" stroke-width="1"/><text transform="translate(20.7,289.5) rotate(-90)" font-size="9.5" font-family="Liberation Sans" fill="#000">60</text><text transform="translate(20.7,375.5) rotate(-90)" font-size="9.5" font-family="Liberation Sans" fill="#000">50</text><text transform="translate(20.7,461.5) rotate(-90)" font-size="9.5" font-family="Liberation Sans" fill="#000">40</text></svg>
<div class="a" style="left:31px;top:225px;width:1249px;height:288px;background:#FCFBF6"></div>
<svg class="a" style="left:31px;top:225px" width="1249" height="288" viewBox="31 225 1249 288"><g stroke="#111" fill="none" stroke-linecap="square"><path d="M68.5 223 L67.5 512" stroke-width="2.6"/><path d="M152.7 223 L152.5 277 L157.5 278.4583333333333 L147.5 281.375 L157.5 284.2916666666667 L147.5 287.2083333333333 L157.5 290.125 L147.5 293.0416666666667 L152.3 294.5 L151.5 474" stroke-width="2.8"/><path d="M249 223 L249 293 L357 293 L357 334" stroke-width="2.2"/><path d="M285 223 L285 462" stroke-width="2.6"/><path d="M321 425 L321 245 L379 245" stroke-width="2.2"/><path d="M379 245 L380.3333333333333 248.5 L383.0 241.5 L385.6666666666667 248.5 L388.3333333333333 241.5 L391.0 248.5 L393.6666666666667 241.5 L395 245" stroke-width="2.2"/><path d="M395 245 L680 245 L680 263" stroke-width="2.2"/><path d="M452 223 L452 293 L429 293 L429 334" stroke-width="2.2"/><path d="M321 425 L368 425 L368 396" stroke-width="2.2"/><path d="M344 334 L441 334 L441 396 L344 396 L344 334" stroke-width="2.0"/><path d="M357 334 L357 360 L362 371" stroke-width="2.0"/><path d="M429 334 L429 360 L424 371" stroke-width="2.0"/><path d="M356 371 L381 371" stroke-width="2.4"/><path d="M404 371 L430 371" stroke-width="2.4"/><path d="M368 371 L368 396" stroke-width="2.0"/><path d="M416 371 L416 425" stroke-width="2.0"/><path d="M416 425 L420 426.3333333333333 L412 429.0 L420 431.6666666666667 L412 434.3333333333333 L420 437.0 L412 439.6666666666667 L416 441" stroke-width="2.2"/><path d="M416 441 L416 512" stroke-width="2.4"/><path d="M392 353 L392 440" stroke-width="2.0"/><path d="M378 370Q382 356 392 353Q402 356 406 370" stroke-width="2.2"/><path d="M377 366L381 356L387 362Z M407 366L403 356L397 362Z" fill="#111" stroke-width="1.2"/><circle cx="392" cy="353" r="4" fill="#111" stroke="none"/><path d="M500 223 L500 475" stroke-width="2.4"/><path d="M584 223 L584 512" stroke-width="2.6"/><path d="M584 269 L631 269 L631 308" stroke-width="2.2"/><path d="M631 315 L631 355" stroke-width="2.2"/><path d="M584 378 L630 378 L630 416" stroke-width="2.2"/><path d="M630 424 L630 453" stroke-width="2.2"/><path d="M62 474 L500 475 L640 476 L788 477 L788 423" stroke-width="2.2"/><path d="M739 245 L788 245" stroke-width="2.2"/><path d="M739 245 L739 263" stroke-width="2.2"/><path d="M788 223 L788 263" stroke-width="2.4"/><path d="M836 263 L836 245 L885 245" stroke-width="2.2"/><path d="M836 423 L836 512" stroke-width="2.4"/><path d="M885 223 L885 512" stroke-width="2.6"/><path d="M993 228V512" stroke-width="3.4" stroke-dasharray="19 5" stroke-linecap="butt"/><path d="M1015 223 L1015 512" stroke-width="1.6"/><path d="M32 497 L32 511 L39 511" stroke-width="2"/><path d="M624 308 L639 308" stroke-width="2.6"/><path d="M624 315 L639 315" stroke-width="2.6"/><path d="M623 416 L638 416" stroke-width="2.6"/><path d="M623 424 L638 424" stroke-width="2.6"/></g><path d="M384 440H400" stroke="#111" stroke-width="2.4"/><path d="M386 446L389 440M391 446L394 440M396 446L399 440" stroke="#111" stroke-width="1.6"/><path d="M623 355H639" stroke="#111" stroke-width="2.4"/><path d="M625 361L628 355M630 361L633 355M635 361L638 355" stroke="#111" stroke-width="1.6"/><path d="M622 453H638" stroke="#111" stroke-width="2.4"/><path d="M624 459L627 453M629 459L632 453M634 459L637 453" stroke="#111" stroke-width="1.6"/><circle cx="67.5" cy="474" r="3.8" fill="#111"/><circle cx="151.5" cy="474" r="3.8" fill="#111"/><circle cx="452" cy="245" r="3.8" fill="#111"/><circle cx="500" cy="475" r="3.8" fill="#111"/><circle cx="584" cy="269" r="3.8" fill="#111"/><circle cx="584" cy="378" r="3.8" fill="#111"/><circle cx="788" cy="245" r="3.8" fill="#111"/><circle cx="885" cy="245" r="3.8" fill="#111"/><circle cx="357" cy="334" r="5.5" fill="#FCFBF6" stroke="#111" stroke-width="2"/><circle cx="429" cy="334" r="5.5" fill="#FCFBF6" stroke="#111" stroke-width="2"/><circle cx="368" cy="396" r="5.5" fill="#FCFBF6" stroke="#111" stroke-width="2"/><circle cx="392" cy="396" r="5.5" fill="#FCFBF6" stroke="#111" stroke-width="2"/><circle cx="416" cy="396" r="5.5" fill="#FCFBF6" stroke="#111" stroke-width="2"/><text transform="translate(131.5,305) rotate(-90)" font-family="Liberation Sans" font-weight="bold" fill="#111" stroke="#111" stroke-width="0.1" font-size="13.5" letter-spacing="0.1">R4001</text><text transform="translate(143,322) rotate(-90)" font-family="Liberation Sans" font-weight="bold" fill="#111" stroke="#111" stroke-width="0.1" font-size="13.5" letter-spacing="1.5">6.8K 0.5%</text><text transform="translate(44,484) rotate(-90)" font-family="Liberation Sans" font-weight="bold" fill="#111" stroke="#111" stroke-width="0.1" font-size="13.5" letter-spacing="0.2">TP4004</text><text transform="translate(92,509) rotate(-90)" font-family="Liberation Sans" font-weight="bold" fill="#111" stroke="#111" stroke-width="0.1" font-size="13.5" letter-spacing="0.3">005</text><text transform="translate(285,511) rotate(-90)" font-family="Liberation Sans" font-weight="bold" fill="#111" stroke="#111" stroke-width="0.1" font-size="13.5" letter-spacing="0.3">008</text><text transform="translate(405,511) rotate(-90)" font-family="Liberation Sans" font-weight="bold" fill="#111" stroke="#111" stroke-width="0.1" font-size="13.5" letter-spacing="0.3">007</text><text transform="translate(476,511) rotate(-90)" font-family="Liberation Sans" font-weight="bold" fill="#111" stroke="#111" stroke-width="0.1" font-size="13.5" letter-spacing="0.3">008</text><text transform="translate(512,511) rotate(-90)" font-family="Liberation Sans" font-weight="bold" fill="#111" stroke="#111" stroke-width="0.1" font-size="13.5" letter-spacing="0.3">009</text><text transform="translate(571,511) rotate(-90)" font-family="Liberation Sans" font-weight="bold" fill="#111" stroke="#111" stroke-width="0.1" font-size="13.5" letter-spacing="0.3">010</text><text transform="translate(715,518) rotate(-90)" font-family="Liberation Sans" font-weight="bold" fill="#111" stroke="#111" stroke-width="0.1" font-size="13.5" letter-spacing="0.3">D11</text><text transform="translate(788,518) rotate(-90)" font-family="Liberation Sans" font-weight="bold" fill="#111" stroke="#111" stroke-width="0.1" font-size="13.5" letter-spacing="0.3">D12</text><text transform="translate(880,518) rotate(-90)" font-family="Liberation Sans" font-weight="bold" fill="#111" stroke="#111" stroke-width="0.1" font-size="13.5" letter-spacing="0.3">D13</text><text transform="translate(946,518) rotate(-90)" font-family="Liberation Sans" font-weight="bold" fill="#111" stroke="#111" stroke-width="0.1" font-size="13.5" letter-spacing="0.3">D14</text><text x="357" y="236" font-family="Liberation Sans" font-weight="bold" fill="#111" stroke="#111" stroke-width="0.1" font-size="13" letter-spacing="1.7">4.7K 0.5%</text><text x="375" y="317" font-family="Liberation Sans" font-weight="bold" fill="#111" stroke="#111" stroke-width="0.1" font-size="12" letter-spacing="1.2">Q4003</text><text x="379" y="328" font-family="Liberation Sans" font-weight="bold" fill="#111" stroke="#111" stroke-width="0.1" font-size="9" letter-spacing="0.6">UMW1</text><text transform="translate(441,452) rotate(-90)" font-family="Liberation Sans" font-weight="bold" fill="#111" stroke="#111" stroke-width="0.1" font-size="13.5" letter-spacing="0.4">R4010</text><text transform="translate(455,461) rotate(-90)" font-family="Liberation Sans" font-weight="bold" fill="#111" stroke="#111" stroke-width="0.1" font-size="13.5" letter-spacing="0.8">47K 0.5%</text><text x="520" y="445" font-family="Liberation Sans" font-weight="bold" fill="#111" stroke="#111" stroke-width="0.1" font-size="12.2" letter-spacing="1.2">R4011</text><text x="537" y="457" font-family="Liberation Sans" font-weight="bold" fill="#111" stroke="#111" stroke-width="0.1" font-size="13" letter-spacing="0">0</text><text transform="translate(609,342) rotate(-90)" font-family="Liberation Sans" font-weight="bold" fill="#111" stroke="#111" stroke-width="0.1" font-size="13.5" letter-spacing="0.3">C4015</text><text transform="translate(621,372) rotate(-90)" font-family="Liberation Sans" font-weight="bold" fill="#111" stroke="#111" stroke-width="0.1" font-size="13.5" letter-spacing="0.97">0.01 16V WSR</text><text transform="translate(609,442) rotate(-90)" font-family="Liberation Sans" font-weight="bold" fill="#111" stroke="#111" stroke-width="0.1" font-size="13.5" letter-spacing="0.5">C4016</text><text transform="translate(621,443) rotate(-90)" font-family="Liberation Sans" font-weight="bold" fill="#111" stroke="#111" stroke-width="0.1" font-size="13.5" letter-spacing="0.84">10 10V</text><text transform="translate(825,247) rotate(-90)" font-family="Liberation Sans" font-weight="bold" fill="#111" stroke="#111" stroke-width="0.1" font-size="13.5" letter-spacing="0">CH</text><text transform="translate(813,275) rotate(-90)" font-family="Liberation Sans" font-weight="bold" fill="#111" stroke="#111" stroke-width="0.1" font-size="13.5" letter-spacing="0">V 20</text><text transform="translate(719,266) rotate(-90)" font-family="Liberation Sans" font-weight="bold" fill="#111" stroke="#111" stroke-width="0.1" font-size="13.5" letter-spacing="0">8</text><path d="M289 462.5L433 462.5L582 463.5" stroke="#F8F000" stroke-width="2"/><path d="M289 462.5L433 462.5L582 463.5" stroke="#2030D0" stroke-width="1" stroke-dasharray="4 3"/><path d="M528 463L531 459L535 467L539 459L543 467L547 459L551 467L555 463" stroke="#F8F000" stroke-width="2.2" fill="none"/><rect x="278.5" y="457" width="11" height="10" fill="#8A8A8A" stroke="#404040" stroke-width="1"/><rect x="427.0" y="457" width="11" height="10" fill="#8A8A8A" stroke="#404040" stroke-width="1"/><rect x="576.5" y="458" width="11" height="10" fill="#8A8A8A" stroke="#404040" stroke-width="1"/></svg>
<div class="a" style="left:1280px;top:223px;width:13px;height:290px;background:#FBFBF8"></div>
<div class="a" style="left:1283px;top:204px;width:10px;height:309px;overflow:hidden">
<div class="a" style="left:0;top:36px;width:14px;height:256px;border-radius:2px;background:linear-gradient(to right,#C8D8FC,#BCCFFA 50%,#B8CAF8);border:1px solid #A9BEF5"></div>
<svg class="a" style="left:0px;top:254px" width="12" height="10"><path d="M3 1.5H10M3 3.5H10M3 5.5H10M3 7.5H10" stroke="#EEF3FE" stroke-width="1"/><path d="M3 2.5H10M3 4.5H10M3 6.5H10M3 8.5H10" stroke="#8CA8E8" stroke-width="1"/></svg>
<div class="a" style="left:0px;top:20px;width:14px;height:15px;border-radius:2px;background:linear-gradient(135deg,#D2DEFD,#BCCDF9 60%,#AFC3F6)"></div><svg class="a" style="left:0px;top:20px" width="14" height="15"><path d="M3.0 9.5L7.0 5.5L11.0 9.5" stroke="#4D6185" stroke-width="2.2" fill="none"/></svg>
<div class="a" style="left:0px;top:293px;width:14px;height:15px;border-radius:2px;background:linear-gradient(135deg,#D2DEFD,#BCCDF9 60%,#AFC3F6)"></div><svg class="a" style="left:0px;top:293px" width="14" height="15"><path d="M3.0 5.5L7.0 9.5L11.0 5.5" stroke="#4D6185" stroke-width="2.2" fill="none"/></svg>
</div>
<div class="a" style="left:1293px;top:204px;width:2px;height:324px;background:#ECE9D8"></div>
<div class="a" style="left:10px;top:513px;width:1283px;height:14px;background:#ECE9D8"></div>
<div class="a" style="left:10px;top:513px;width:625px;height:1px;background:#808080"></div>
<svg class="a" style="left:0;top:0" width="1299" height="553"><path d="M47 513L53 527H139L145.5 513Z" fill="#FFFFFF"/><path d="M47.5 514L52.5 527M145.5 513.5L139.5 527" stroke="#707070" stroke-width="1"/></svg>
<div class="a" style="left:56px;top:514px;font-weight:bold;font-size:11.5px;line-height:13px;letter-spacing:0.2px">Modellbereich</div>
<div class="a" style="left:14px;top:516px;width:14px;height:11px;border-radius:2px;background:linear-gradient(135deg,#D2DEFD,#BCCDF9 60%,#AFC3F6)"></div><svg class="a" style="left:14px;top:516px" width="14" height="11"><path d="M9.0 1.5L5.0 5.5L9.0 9.5" stroke="#4D6185" stroke-width="2.2" fill="none"/></svg>
<div class="a" style="left:32px;top:516px;width:14px;height:11px;border-radius:2px;background:linear-gradient(135deg,#D2DEFD,#BCCDF9 60%,#AFC3F6)"></div><svg class="a" style="left:32px;top:516px" width="14" height="11"><path d="M5.0 1.5L9.0 5.5L5.0 9.5" stroke="#4D6185" stroke-width="2.2" fill="none"/></svg>
<div class="a" style="left:630px;top:513px;width:5px;height:14px;border-left:1px solid #fff;border-right:1px solid #808080;background:#ECE9D8"></div>
<div class="a" style="left:636px;top:513px;width:642px;height:14px;background:#F5F4EE"></div>
<div class="a" style="left:652px;top:516px;width:609px;height:11px;border-radius:2px;background:linear-gradient(to bottom,#CAD9FD,#BED0FA 50%,#B9CBF8);border:1px solid #AFC3F6"></div>
<svg class="a" style="left:950px;top:517px" width="12" height="9"><path d="M2.5 1V8M4.5 1V8M6.5 1V8M8.5 1V8" stroke="#EEF3FE" stroke-width="1"/><path d="M3.5 1V8M5.5 1V8M7.5 1V8M9.5 1V8" stroke="#8CA8E8" stroke-width="1"/></svg>
<div class="a" style="left:636px;top:516px;width:15px;height:11px;border-radius:2px;background:linear-gradient(135deg,#D2DEFD,#BCCDF9 60%,#AFC3F6)"></div><svg class="a" style="left:636px;top:516px" width="15" height="11"><path d="M9.5 1.5L5.5 5.5L9.5 9.5" stroke="#4D6185" stroke-width="2.2" fill="none"/></svg>
<div class="a" style="left:1262px;top:516px;width:16px;height:11px;border-radius:2px;background:linear-gradient(135deg,#D2DEFD,#BCCDF9 60%,#AFC3F6)"></div><svg class="a" style="left:1262px;top:516px" width="16" height="11"><path d="M6.0 1.5L10.0 5.5L6.0 9.5" stroke="#4D6185" stroke-width="2.2" fill="none"/></svg>
<div class="a" style="left:4px;top:527px;width:1291px;height:22px;background:#ECE9D8;border-top:2px solid #FFFFFF"></div>
<div class="a" style="left:4px;top:530px;width:1291px;height:1px;background:#A7A492"></div>
<div class="a" style="left:751px;top:533px;width:2px;height:14px;border-left:1px solid #C5C2B2;border-right:1px solid #fff"></div>
<div class="a" style="left:756px;top:533px;width:40px;height:14px;border:1px solid #DCD9CB;border-radius:3px;background:#ECE9D8;font-size:10.5px;line-height:14px;text-align:center;color:#A7A69E">RFANG</div>
<div class="a" style="left:799px;top:533px;width:41px;height:14px;border:1px solid #2C5A9C;border-radius:3px;background:linear-gradient(to bottom,#F2F1EA,#E4E2D6);font-size:10.5px;line-height:14px;text-align:center;color:#000">VFANG</div>
<div class="a" style="left:842px;top:533px;width:42px;height:14px;border:1px solid #2C5A9C;border-radius:3px;background:linear-gradient(to bottom,#F2F1EA,#E4E2D6);font-size:10.5px;line-height:14px;text-align:center;color:#000">OSNAP</div>
<div class="a" style="left:887px;top:533px;width:39px;height:14px;border:1px solid #DCD9CB;border-radius:3px;background:#ECE9D8;font-size:10.5px;line-height:14px;text-align:center;color:#A7A69E">POLAR</div>
<div class="a" style="left:930px;top:533px;width:42px;height:14px;border:1px solid #DCD9CB;border-radius:3px;background:#ECE9D8;font-size:10.5px;line-height:14px;text-align:center;color:#A7A69E">GITTER</div>
<div class="a" style="left:975px;top:533px;width:43px;height:14px;border:1px solid #DCD9CB;border-radius:3px;background:#ECE9D8;font-size:10.5px;line-height:14px;text-align:center;color:#A7A69E">ORTHO</div>
<div class="a" style="left:1021px;top:533px;width:45px;height:14px;border:1px solid #2C5A9C;border-radius:3px;background:linear-gradient(to bottom,#F2F1EA,#E4E2D6);font-size:10.5px;line-height:14px;text-align:center;color:#000">RZEICH</div>
<div class="a" style="left:1068px;top:533px;width:24px;height:14px;border:1px solid #2C5A9C;border-radius:3px;background:linear-gradient(to bottom,#F2F1EA,#E4E2D6);font-size:10.5px;line-height:14px;text-align:center;color:#000">SW</div>
<div class="a" style="left:1094px;top:533px;width:21px;height:14px;border:1px solid #2C5A9C;border-radius:3px;background:linear-gradient(to bottom,#F2F1EA,#E4E2D6);font-size:10.5px;line-height:14px;text-align:center;color:#000">SH</div>
<svg class="a" style="left:1280px;top:536px" width="13" height="13"><g fill="#B8B49E"><rect x="9" y="2" width="2" height="2"/><rect x="6" y="5" width="2" height="2"/><rect x="9" y="5" width="2" height="2"/><rect x="3" y="8" width="2" height="2"/><rect x="6" y="8" width="2" height="2"/><rect x="9" y="8" width="2" height="2"/></g></svg>
<svg class="a" style="left:0;top:0" width="1299" height="553"><path d="M100 35 A36.1 36.1 0 0 1 170 18 A38.3 38.3 0 0 1 245 25 A37.1 37.1 0 0 1 298 73 A43.2 43.2 0 0 1 307.5 148.3 A36.4 36.4 0 0 1 259.6 198.6 A34.6 34.6 0 0 1 190.5 201.7 A31.6 31.6 0 1 1 127.5 199 A37.4 37.4 0 0 1 69 168 A40.4 40.4 0 0 1 56 97 A40.1 40.1 0 0 1 100 35 Z" fill="#fff" stroke="#7F7FEF" stroke-width="2.2"/></svg>
<div class="a" style="left:60px;top:77px;width:246px;text-align:center;color:#12128C;font-size:19px;line-height:26px"><div style="letter-spacing:0.85px">RxSpotlight EDIT:</div><div>gescannte Papierpläne</div><div>bearbeiten</div></div>
<div class="a" style="left:640px;top:261px;width:244px;height:162px;background:linear-gradient(to right,#0048D8,#0058EE 2px,#0055E5 4px,#0055E5 240px,#0040C8);border-radius:2px 2px 0 0;overflow:hidden"><div class="a title" style="left:0;top:0;width:244px;height:22px;background:linear-gradient(to bottom,#0842D0 0px,#3D95FF 1px,#3D95FF 2px,#1A6FF0 3px,#0058E6 5px,#0055E5 11px,#0062F4 15px,#0066FA 19px,#0050D8 21px,#003DBB 22px)"></div></div>
<div class="a" style="left:644px;top:283px;width:236px;height:136px;background:#ECE9D8"></div>
<div class="a ttext" style="left:644px;top:267px;font-size:12px;line-height:14px;letter-spacing:-0.15px">Sprenkel Entferner</div>
<div class="a" style="left:865px;top:267px;width:13px;height:13px;border:1px solid #fff;border-radius:2px;background:radial-gradient(circle at 35% 30%,#F0A890 0%,#E2683F 45%,#D2451C 80%,#C03C18 100%)"><svg class="a" style="left:-1px;top:-1px" width="13" height="13"><path d="M3.5 3.5L9.5 9.5M9.5 3.5L3.5 9.5" stroke="#fff" stroke-width="1.8"/></svg></div>
<div class="a" style="left:662px;top:307px;width:202px;height:40px;border:1px solid #D0D0BF;border-radius:4px"></div>
<div class="a" style="left:668px;top:301px;padding:0 2px;background:#ECE9D8;color:#0046D5;line-height:12px;letter-spacing:-0.2px">Sprenkelgröße</div>
<div class="a" style="left:671px;top:318px;width:63px;height:20px;border:1px solid #9DB2CF;background:#EBE8D7"></div>
<div class="a" style="left:674px;top:322px;color:#ADAA9C;line-height:12px">0.00</div>
<div class="a" style="left:791px;top:318px;width:63px;height:20px;border:1px solid #9DB2CF;background:#EBE8D7"></div>
<div class="a" style="left:794px;top:322px;color:#ADAA9C;line-height:12px">0 Punkt</div>
<div class="a" style="left:836px;top:319px;width:17px;height:18px;background:#E4E3DD;border-left:1px solid #F4F3EE"></div>
<svg class="a" style="left:836px;top:319px" width="17" height="18"><path d="M5 7L8.5 4L12 7M5 11L8.5 14L12 11" stroke="#B7B5AC" stroke-width="1.5" fill="none"/></svg>
<svg class="a" style="left:735px;top:318px" width="45" height="20"><path d="M3 6Q5 2 9 4L15 8Q17 12 13 15L7 17Q3 14 3 10Z" fill="#A8A69A"/><path d="M5 12L13 6M6 9L10 13M9 7L12 10" stroke="#fff" stroke-width="1"/><path d="M26 14L36 4Q40 6 38 9L30 17Z" fill="#A8A69A"/><path d="M25 11L33 3M27 8L29 10M30 5L32 7" stroke="#fff" stroke-width="1"/></svg>
<div class="a" style="left:670px;top:358px;width:13px;height:13px;border:1px solid #1C5180;background:linear-gradient(135deg,#DCDCD7,#FFFFFF)"></div>
<svg class="a" style="left:670px;top:358px" width="13" height="13"><path d="M3 6L5.5 8.5L10 3.5" stroke="#21A121" stroke-width="2" fill="none"/></svg>
<div class="a" style="left:686px;top:359px;line-height:12px;letter-spacing:-0.25px">Automatische Ermittlung</div>
<div class="a" style="left:645px;top:385px;width:229px;height:2px;border-top:1px solid #D0CFC5;border-bottom:1px solid #FFFFFF"></div>
<div class="a" style="left:694px;top:390px;width:55px;height:21px;border:1px solid #003C74;border-radius:3px;background:linear-gradient(to bottom,#FFFFFF,#F3F3EF 60%,#E8E7E0);box-shadow:inset 0 0 0 1px #C0D2F3,inset 0 -1px 0 2px #8DB2E3;text-align:center;line-height:19px;white-space:nowrap;overflow:hidden">Verwender</div>
<div class="a" style="left:753px;top:390px;width:55px;height:21px;border:1px solid #003C74;border-radius:3px;background:linear-gradient(to bottom,#FFFFFF,#F3F3EF 60%,#E8E7E0);box-shadow:inset 0 -2px 0 #D6D0C5,inset -1px 0 0 #E3DED3;text-align:center;line-height:19px;white-space:nowrap;overflow:hidden">Schließen</div>
<div class="a" style="left:812px;top:390px;width:55px;height:21px;border:1px solid #003C74;border-radius:3px;background:linear-gradient(to bottom,#FFFFFF,#F3F3EF 60%,#E8E7E0);box-shadow:inset 0 -2px 0 #D6D0C5,inset -1px 0 0 #E3DED3;text-align:center;line-height:19px;white-space:nowrap;overflow:hidden">Hilfe</div>
</body></html>
